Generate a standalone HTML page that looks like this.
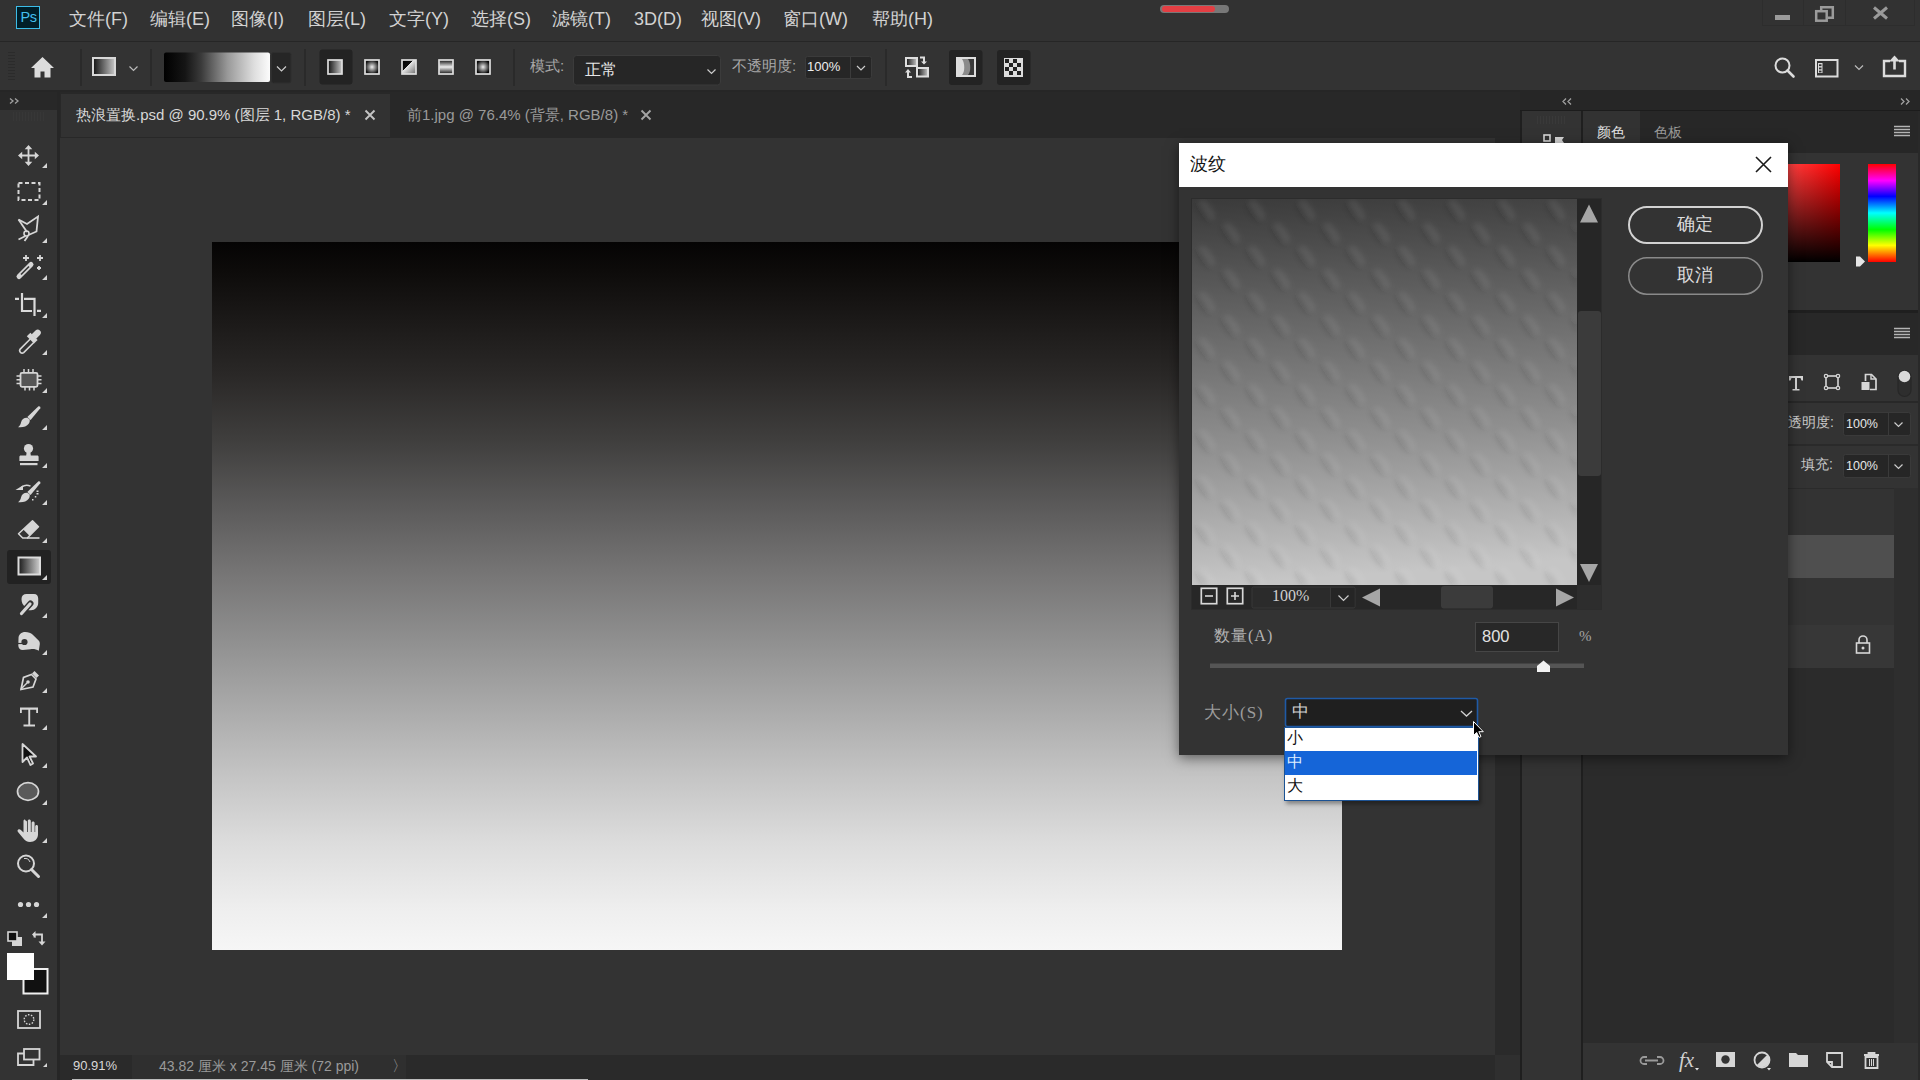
<!DOCTYPE html>
<html><head><meta charset="utf-8">
<style>
*{margin:0;padding:0;box-sizing:border-box}
html,body{width:1920px;height:1080px;overflow:hidden;background:#323232;font-family:"Liberation Sans",sans-serif;color:#d4d4d4}
.a{position:absolute}
.mi{top:7px;font-size:18px;line-height:24px;color:#d2d2d2;white-space:nowrap}
.sep{width:2px;background:#2a2a2a;top:49px;height:37px}
.lbl{font-size:15px;color:#a8a8a8;white-space:nowrap}
svg{position:absolute;overflow:visible}
</style></head><body>
<!-- ===== MENU BAR ===== -->
<div class="a" style="left:0;top:0;width:1920px;height:41px;background:#323232"></div>
<div class="a" style="left:0;top:41px;width:1920px;height:1px;background:#262626"></div>
<!-- Ps logo -->
<div class="a" style="left:16px;top:6px;width:24px;height:23px;background:#001e28;border:1.5px solid #3cbde8"></div>
<div class="a" style="left:20.5px;top:8.5px;font-size:14.5px;line-height:16px;color:#43bfee;letter-spacing:-0.3px">Ps</div>
<div class="a mi" style="left:69px">文件(F)</div>
<div class="a mi" style="left:150px">编辑(E)</div>
<div class="a mi" style="left:231px">图像(I)</div>
<div class="a mi" style="left:308px">图层(L)</div>
<div class="a mi" style="left:389px">文字(Y)</div>
<div class="a mi" style="left:471px">选择(S)</div>
<div class="a mi" style="left:552px">滤镜(T)</div>
<div class="a mi" style="left:634px">3D(D)</div>
<div class="a mi" style="left:701px">视图(V)</div>
<div class="a mi" style="left:783px">窗口(W)</div>
<div class="a mi" style="left:872px">帮助(H)</div>
<!-- progress pill -->
<div class="a" style="left:1160px;top:4.5px;width:69px;height:8px;border-radius:4px;background:#787878"></div>
<div class="a" style="left:1161.5px;top:5.5px;width:53px;height:6px;border-radius:3px;background:#e33e43"></div>
<!-- window controls -->
<div class="a" style="left:1762px;top:0;width:153px;height:26px;border:1px solid #2d2d2d;border-top:0"></div>
<div class="a" style="left:1803px;top:0;width:1px;height:25px;background:#2d2d2d"></div>
<div class="a" style="left:1845px;top:0;width:1px;height:25px;background:#2d2d2d"></div>
<svg style="left:0;top:0" width="1920" height="41">
  <rect x="1775" y="15" width="15" height="5" fill="#9a9a9a"/>
  <path d="M1821.2 10V7.2h11.6v10.6h-5" fill="none" stroke="#9a9a9a" stroke-width="2.5"/>
  <rect x="1816.2" y="11.2" width="10.5" height="9.5" fill="none" stroke="#9a9a9a" stroke-width="2.5"/>
  <path d="M1874 7.5L1887 18.5M1887 7.5L1874 18.5" stroke="#9a9a9a" stroke-width="3"/>
</svg>

<!-- ===== OPTIONS BAR ===== -->
<div class="a" style="left:0;top:42px;width:1920px;height:48px;background:#333333"></div>
<div class="a" style="left:0;top:90px;width:1920px;height:2px;background:#262626"></div>
<svg style="left:0;top:0" width="1920" height="92">
  <defs>
    <linearGradient id="gh" x1="0" x2="1" y1="0" y2="0"><stop offset="0" stop-color="#111"/><stop offset="1" stop-color="#c8c8c8"/></linearGradient>
    <linearGradient id="gbar" x1="0" x2="1"><stop offset="0" stop-color="#000"/><stop offset=".2" stop-color="#151515"/><stop offset=".35" stop-color="#3a3a3a"/><stop offset=".6" stop-color="#999"/><stop offset=".85" stop-color="#dedede"/><stop offset="1" stop-color="#fcfcfc"/></linearGradient>
    <radialGradient id="grad-r"><stop offset="0" stop-color="#f0f0f0"/><stop offset="1" stop-color="#151515"/></radialGradient>
    <linearGradient id="grad-ref" x1="0" x2="0" y1="0" y2="1"><stop offset="0" stop-color="#111"/><stop offset=".5" stop-color="#eee"/><stop offset="1" stop-color="#111"/></linearGradient>
    <linearGradient id="grad-ang" x1="0" x2="1" y1="0" y2="1"><stop offset="0" stop-color="#000"/><stop offset=".42" stop-color="#111"/><stop offset=".42" stop-color="#e6e6e6"/><stop offset="1" stop-color="#6a6a6a"/></linearGradient>
    <radialGradient id="grad-dia"><stop offset="0" stop-color="#eee"/><stop offset="1" stop-color="#0a0a0a"/></radialGradient>
  </defs>
  <!-- grip -->
  <g fill="#2b2b2b"><rect x="8" y="52" width="7" height="1"/><rect x="8" y="55" width="7" height="1"/><rect x="8" y="58" width="7" height="1"/><rect x="8" y="61" width="7" height="1"/><rect x="8" y="64" width="7" height="1"/><rect x="8" y="67" width="7" height="1"/><rect x="8" y="70" width="7" height="1"/><rect x="8" y="73" width="7" height="1"/><rect x="8" y="76" width="7" height="1"/><rect x="8" y="79" width="7" height="1"/></g>
  <!-- home -->
  <path d="M42.5 57L31 68h3.5v9.5h6v-6h4v6h6V68H54z" fill="#dcdcdc"/>
  <rect x="80" y="49" width="2" height="37" fill="#2a2a2a"/>
  <!-- preset swatch -->
  <rect x="93" y="58" width="22" height="17" fill="url(#gh)" stroke="#d8d8d8" stroke-width="2"/>
  <path d="M129.5 66.5l4 4 4-4" fill="none" stroke="#bbb" stroke-width="1.2"/>
  <rect x="150" y="49" width="2" height="37" fill="#2a2a2a"/>
  <!-- gradient bar -->
  <rect x="164" y="52.5" width="106" height="29.5" rx="2" fill="url(#gbar)"/>
  <rect x="271.5" y="52.5" width="19.5" height="30.5" rx="2" fill="#262626" stroke="#2e2e2e"/>
  <path d="M277 66.5l4.5 4.5 4.5-4.5" fill="none" stroke="#ccc" stroke-width="1.2"/>
  <rect x="304" y="49" width="2" height="37" fill="#2a2a2a"/>
  <!-- gradient types -->
  <rect x="319.5" y="49.5" width="33" height="35" rx="3" fill="#232323"/>
  <rect x="328" y="60" width="14" height="14" fill="url(#gh)" stroke="#dedede" stroke-width="1.7"/>
  <rect x="365" y="60" width="14" height="14" fill="url(#grad-r)" stroke="#dedede" stroke-width="1.7"/>
  <rect x="402" y="60" width="14" height="14" fill="url(#grad-ang)" stroke="#dedede" stroke-width="1.7"/>
  <rect x="439" y="60" width="14" height="14" fill="url(#grad-ref)" stroke="#dedede" stroke-width="1.7"/>
  <rect x="476" y="60" width="14" height="14" fill="url(#grad-dia)" stroke="#dedede" stroke-width="1.7"/>
  <rect x="513" y="49" width="2" height="37" fill="#2a2a2a"/>
  <!-- mode dropdown -->
  <rect x="573.5" y="55.5" width="147" height="29.5" rx="3" fill="#262626" stroke="#3b3b3b"/>
  <path d="M707.5 69.5l4 4 4-4" fill="none" stroke="#ccc" stroke-width="1.2"/>
  <!-- opacity box -->
  <rect x="805.5" y="56.5" width="66" height="22" rx="2" fill="#262626" stroke="#3b3b3b"/>
  <rect x="850" y="57" width="1" height="21" fill="#3b3b3b"/>
  <path d="M857 66l4 4 4-4" fill="none" stroke="#ccc" stroke-width="1.2"/>
  <rect x="885" y="49" width="2" height="37" fill="#2a2a2a"/>
  <!-- reverse icon -->
  <rect x="906" y="58" width="11" height="8" fill="url(#gh)" stroke="#dedede" stroke-width="2"/>
  <rect x="917" y="68" width="11" height="8.5" fill="url(#gh)" stroke="#dedede" stroke-width="2"/>
  <path d="M920 57.5h4v5" fill="none" stroke="#dedede" stroke-width="2"/><path d="M921 61.5h6l-3 3z" fill="#dedede"/>
  <path d="M912 77h-4v-5" fill="none" stroke="#dedede" stroke-width="2"/><path d="M905 72.5h6l-3-3.5z" fill="#dedede"/>
  <!-- dither -->
  <rect x="949" y="50" width="33.5" height="35" rx="3" fill="#232323"/>
  <rect x="957" y="58" width="18" height="18" fill="#3a3a3a" stroke="#dedede" stroke-width="2"/>
  <path d="M958 59h6c3 4 3 13 0 16h-6z" fill="#dcdcdc"/>
  <path d="M962 59h6c3 4 3 13 0 16h-6c3-3 3-12 0-16z" fill="#8a8a8a"/>
  <!-- transparency -->
  <rect x="997" y="50" width="33.5" height="35" rx="3" fill="#232323"/>
  <rect x="1004" y="58" width="19" height="19" fill="#dcdcdc"/>
  <g fill="#222"><rect x="1005" y="59" width="4" height="4"/><rect x="1013" y="59" width="4" height="4"/><rect x="1009" y="63" width="4" height="4"/><rect x="1017" y="63" width="4" height="4"/><rect x="1005" y="67" width="4" height="4"/><rect x="1013" y="67" width="4" height="4"/><rect x="1009" y="71" width="4" height="4"/><rect x="1017" y="71" width="4" height="4"/></g>
  <!-- right icons -->
  <circle cx="1782.5" cy="65.5" r="7" fill="none" stroke="#dcdcdc" stroke-width="2"/>
  <path d="M1787.5 70.5l6 6" stroke="#dcdcdc" stroke-width="2.6" stroke-linecap="round"/>
  <rect x="1816" y="60" width="21.5" height="16.5" fill="none" stroke="#dcdcdc" stroke-width="2"/>
  <rect x="1818" y="63" width="4.5" height="10" fill="#dcdcdc"/><rect x="1819" y="64.3" width="2.5" height="1.8" fill="#333"/><rect x="1819" y="67.5" width="2.5" height="1.8" fill="#333"/><rect x="1819" y="70.6" width="2.5" height="1.8" fill="#333"/>
  <path d="M1855 65.5l4 4 4-4" fill="none" stroke="#bbb" stroke-width="1.2"/>
  <path d="M1890 61h-6v15h21V61h-6" fill="none" stroke="#dcdcdc" stroke-width="2.4"/>
  <path d="M1894.5 69.5V59" stroke="#dcdcdc" stroke-width="2.6"/><path d="M1889 61.5l5.5-6 5.5 6z" fill="#dcdcdc"/>
</svg>
<div class="a lbl" style="left:530px;top:57px">模式:</div>
<div class="a" style="left:585px;top:60px;font-size:16px;color:#e6e6e6">正常</div>
<div class="a lbl" style="left:732px;top:57px">不透明度:</div>
<div class="a" style="left:807px;top:59px;font-size:13px;color:#eeeeee">100%</div>

<!-- ===== TOOLBAR ===== -->
<div class="a" style="left:0;top:92px;width:57px;height:988px;background:#333333"></div>
<div class="a" style="left:0;top:92px;width:57px;height:18px;background:#282828"></div>
<div class="a" style="left:57px;top:92px;width:3px;height:988px;background:#262626"></div>
<svg style="left:0;top:0" width="60" height="1080">
  <defs>
    <linearGradient id="tg" x1="0" x2="1"><stop offset="0" stop-color="#1a1a1a"/><stop offset="1" stop-color="#cfcfcf"/></linearGradient>
  </defs>
  <!-- >> -->
  <path d="M10 98.5l3 2.5-3 2.5M15 98.5l3 2.5-3 2.5" fill="none" stroke="#a0a0a0" stroke-width="1.3"/>
  <!-- grip -->
  <g fill="#373737"><rect x="13" y="112" width="1" height="9"/><rect x="16" y="112" width="1" height="9"/><rect x="19" y="112" width="1" height="9"/><rect x="22" y="112" width="1" height="9"/><rect x="25" y="112" width="1" height="9"/><rect x="28" y="112" width="1" height="9"/><rect x="31" y="112" width="1" height="9"/><rect x="34" y="112" width="1" height="9"/><rect x="37" y="112" width="1" height="9"/><rect x="40" y="112" width="1" height="9"/><rect x="43" y="112" width="1" height="9"/></g>
  <g fill="#d6d6d6" stroke="none">
    <!-- corner triangles -->
    <path d="M47 163v5h-5z M47 200v5h-5z M47 238v5h-5z M47 275v5h-5z M47 313v5h-5z M47 350v5h-5z M47 388v5h-5z M47 425v5h-5z M47 463v5h-5z M47 500v5h-5z M47 538v5h-5z M47 575v5h-5z M47 613v5h-5z M47 650v5h-5z M47 688v5h-5z M47 725v5h-5z M47 763v5h-5z M47 800v5h-5z M47 838v5h-5z M47 913v5h-5z" />
    <path d="M47 1063v4h-4z"/>
    <!-- move -->
    <path d="M28.5 145l-3.8 4.2h7.6z M28.5 166l-3.8-4.2h7.6z M18 155.5l4.2-3.8v7.6z M39 155.5l-4.2-3.8v7.6z"/><path d="M28.5 148v15M21 155.5h15" stroke="#d6d6d6" stroke-width="1.8"/>
  </g>
  <!-- marquee -->
  <rect x="18.5" y="183" width="21" height="17" fill="none" stroke="#d6d6d6" stroke-width="2" stroke-dasharray="4 2.5"/>
  <!-- lasso polygonal -->
  <path d="M18.5 219.5L27 224l11-7.5-1.5 15-8 3.5M25.5 236l-7 3.5M28 236l-3.5 5" fill="none" stroke="#d6d6d6" stroke-width="1.8"/>
  <path d="M18.5 219.5L27 232" fill="none" stroke="#d6d6d6" stroke-width="1.8"/>
  <circle cx="26.5" cy="233.5" r="2.5" fill="none" stroke="#d6d6d6" stroke-width="1.6"/>
  <!-- magic wand -->
  <path d="M19 276.5l12-12" stroke="#d6d6d6" stroke-width="5" stroke-linecap="round"/>
  <path d="M21 274.5l8-8" stroke="#333" stroke-width="1.6"/>
  <path d="M26 255v6M23 258h6M40 255v6M37 258h6M39 266v4M37 268h4" stroke="#d6d6d6" stroke-width="1.8"/>
  <!-- crop -->
  <path d="M15 298.8h4 M22 293v18h10 M24 298.8h10.5v17.2 M37 310.8h4" fill="none" stroke="#dadada" stroke-width="2.2"/>
  <!-- eyedropper -->
  <path d="M30.5 338.8L20.2 349.1a2.5 2.5 0 0 0 3.5 3.5L34 342.3" fill="none" stroke="#d6d6d6" stroke-width="1.6"/>
  <path d="M26.8 336.3l3.6-3.6 7.2 7.2-3.6 3.6z" fill="#d6d6d6"/>
  <path d="M31.5 334.5l4-4a3.1 3.1 0 0 1 4.4 4.4l-4 4z" fill="#d6d6d6"/>
  <!-- chip / frame -->
  <rect x="20.5" y="372.8" width="17" height="14" rx="1.5" fill="#555" stroke="#d6d6d6" stroke-width="1.8"/>
  <path d="M24 369v3.5M28.5 369v3.5M33 369v3.5M25 387v3.5M29.5 387v3.5M34 387v3.5M16.5 376h3.5M16.5 379.8h3.5M16.5 383.6h3.5M38 376h3.5M38 379.8h3.5M38 383.6h3.5" stroke="#d6d6d6" stroke-width="1.5"/>
  <!-- brush -->
  <path d="M38.2 406.6c1.1-.8 2.7.3 2.1 1.6L30.6 420l-3.3-3z" fill="#d6d6d6"/>
  <path d="M27.2 417.8c-3.2-.2-5.6 1.8-6.2 4.8-.4 2-1.5 3.6-2.9 4.6 4.2.6 8.6-.4 10.6-3.4 1-1.6 1.3-3.2.9-4.6z" fill="#d6d6d6"/>
  <!-- stamp -->
  <circle cx="28.5" cy="448.5" r="4.6" fill="#d6d6d6"/>
  <path d="M26.8 451h3.4l.6 4.6h6.4c.8 0 1.4.6 1.4 1.4v4h-19.2v-4c0-.8.6-1.4 1.4-1.4h5.4z" fill="#d6d6d6"/>
  <rect x="20" y="463" width="17.5" height="2.2" fill="#d6d6d6"/>
  <!-- history brush -->
  <path d="M38.2 481.6c1.1-.8 2.7.3 2.1 1.6L30.6 495l-3.3-3z" fill="#d6d6d6"/>
  <path d="M27.2 492.8c-3.2-.2-5.6 1.8-6.2 4.8-.4 2-1.5 3.6-2.9 4.6 4.2.6 8.6-.4 10.6-3.4 1-1.6 1.3-3.2.9-4.6z" fill="#d6d6d6"/>
  <path d="M15.5 490l7.5-4.8v4.8z" fill="#d6d6d6"/><path d="M21.5 487.2c2.5-2 6-2.6 9-1" fill="none" stroke="#d6d6d6" stroke-width="1.4"/>
  <path d="M36.5 490.5h2v1.5h-2zM36.5 493h2v1.5h-2zM34.8 496h1.5v1.5h-1.5zM32 499h1.5v1.5H32z" fill="#d6d6d6"/>
  <!-- eraser -->
  <path d="M32.5 520.8l6 6-9 9-6-6z" fill="#d6d6d6"/>
  <path d="M32.5 520.8l6 6L27.3 538h-4.6l-4.2-4.2z" fill="none" stroke="#d6d6d6" stroke-width="1.5" stroke-linejoin="round"/>
  <path d="M27 538h12.5" stroke="#d6d6d6" stroke-width="1.6"/>
  <!-- gradient selected -->
  <rect x="7" y="550" width="44" height="34" rx="3" fill="#222222"/>
  <rect x="18.5" y="557.5" width="21.5" height="17" fill="url(#tg)" stroke="#dcdcdc" stroke-width="2"/>
  <path d="M47 575v5h-5z" fill="#d6d6d6"/>
  <!-- smudge -->
  <path d="M21.5 599c0-3.2 2-5 5-5h7.5c2.8 0 4.2 1.8 4.2 4.5v4.5c0 4-3.2 7.2-7.2 7.2h-2.5l-3-3.5c-2.6-1.2-4-4-4-7.7z" fill="#d6d6d6"/>
  <path d="M30.5 603.5l-9 10" stroke="#333" stroke-width="6" stroke-linecap="round"/>
  <path d="M30 604l-8.5 9.5" stroke="#d6d6d6" stroke-width="3.2" stroke-linecap="round"/>
  <!-- sponge -->
  <path d="M18.5 638.5c0-4 2.8-6.5 6.8-6.5 3 0 5.5 1 7.5 2.8l5.8 5.6c1 1 1.4 2.4 1.2 3.8l-1 6.6c-2.6-1.6-5.2-2-8.4-1.6l-7.6.8c-2.8 0-4.5-1.8-4.5-4.5z" fill="#d6d6d6"/>
  <circle cx="24.5" cy="642" r="3.1" fill="#333"/>
  <path d="M17.5 643.5h5" stroke="#333" stroke-width="1.2"/>
  <!-- pen -->
  <path d="M34.5 671l4.5 4.5-2.5 2.5-4.5-4.5z" fill="#d6d6d6"/>
  <path d="M31.5 674.5l4.5 4.5-3 8-12 2.5 2.5-12z" fill="none" stroke="#d6d6d6" stroke-width="1.7"/>
  <path d="M21 689l6-6" stroke="#d6d6d6" stroke-width="1.4"/>
  <circle cx="28" cy="682" r="1.8" fill="#d6d6d6"/>
  <!-- type -->
  <path d="M20 707.5h18v5.5h-1.8v-3.2h-6v14.7h4.8v1.9h-11.5v-1.9h4.8V709.8h-6.5v3.2H20z" fill="#d6d6d6"/>
  <!-- path selection -->
  <path d="M22.5 744v18l4.5-4.5 3.5 7.5 2.5-1.5-3.5-7h6.5z" fill="#111" stroke="#d6d6d6" stroke-width="1.8" stroke-linejoin="round"/>
  <!-- ellipse -->
  <ellipse cx="28" cy="791.5" rx="10.5" ry="8.8" fill="#5a5a5a" stroke="#d6d6d6" stroke-width="1.7"/>
  <!-- hand -->
  <path d="M25.5 820.5c1 0 1.5.8 1.5 1.5v10h.8V821c0-1 .7-1.5 1.5-1.5s1.5.5 1.5 1.5v11h.8v-9c0-1 .7-1.5 1.5-1.5s1.5.5 1.5 1.5v9h.6v-5.5c0-1 .7-1.5 1.4-1.5s1.4.5 1.4 1.5v8c0 4.5-3.5 7.5-8 7.5-3 0-5-1.5-7-4l-5-6c-.8-1-.5-2 .3-2.5s1.8-.3 2.6.5l2.6 2.5v-11.5c0-1 .7-1.5 1.5-1.5z" fill="#d6d6d6"/>
  <!-- zoom -->
  <circle cx="26" cy="863.5" r="8" fill="none" stroke="#d6d6d6" stroke-width="2"/>
  <path d="M31.5 869.5l7 7" stroke="#d6d6d6" stroke-width="3" stroke-linecap="round"/>
  <path d="M24 858.5a5.5 5.5 0 0 1 6 3.5" fill="none" stroke="#d6d6d6" stroke-width="1"/>
  <!-- dots -->
  <circle cx="20.5" cy="904.5" r="2.6" fill="#d6d6d6"/><circle cx="28.5" cy="904.5" r="2.6" fill="#d6d6d6"/><circle cx="36.5" cy="904.5" r="2.6" fill="#d6d6d6"/>
  <!-- default colors -->
  <rect x="12" y="937" width="10" height="9" fill="#d6d6d6"/>
  <rect x="8" y="932" width="9" height="9" fill="#111" stroke="#d6d6d6" stroke-width="1.6"/>
  <!-- swap -->
  <path d="M34.5 937.5v-3h7.5v8" fill="none" stroke="#d6d6d6" stroke-width="1.8"/>
  <path d="M32 934.5l3.5-3.5v7z M38.5 941.5h7l-3.5 4z" fill="#d6d6d6"/>
  <!-- bg / fg -->
  <rect x="23.5" y="969" width="24" height="24.5" fill="#111" stroke="#f0f0f0" stroke-width="2"/>
  <rect x="7" y="953" width="27" height="27" fill="#ffffff"/>
  <!-- quick mask -->
  <rect x="18" y="1011" width="22" height="17" fill="none" stroke="#d6d6d6" stroke-width="1.8"/>
  <circle cx="29" cy="1019.5" r="4.8" fill="none" stroke="#d6d6d6" stroke-width="1.4" stroke-dasharray="1.5 1.5"/>
  <!-- screen mode -->
  <rect x="24" y="1049" width="15.5" height="10.5" fill="#333" stroke="#d6d6d6" stroke-width="1.8"/>
  <path d="M24 1053.5h-6v11.5h15.5v-5.5" fill="none" stroke="#d6d6d6" stroke-width="1.8"/>
</svg>

<!-- ===== TAB BAR ===== -->
<div class="a" style="left:60px;top:92px;width:1460px;height:46px;background:#282828"></div>
<div class="a" style="left:61px;top:94px;width:329px;height:43px;background:#323232"></div>
<div class="a" style="left:76px;top:106px;font-size:15px;color:#d8d8d8;white-space:nowrap">热浪置换.psd @ 90.9% (图层 1, RGB/8) *</div>
<svg style="left:0;top:0" width="700" height="140"><path d="M365.5 110.5l9 9M374.5 110.5l-9 9" stroke="#c4c4c4" stroke-width="1.9"/><path d="M641.5 110.5l9 9M650.5 110.5l-9 9" stroke="#a4a4a4" stroke-width="1.9"/></svg>
<div class="a" style="left:407px;top:106px;font-size:15px;color:#9a9a9a;white-space:nowrap">前1.jpg @ 76.4% (背景, RGB/8) *</div>


<!-- ===== CANVAS ===== -->
<div class="a" style="left:60px;top:138px;width:1435px;height:917px;background:#333333"></div>
<div class="a" style="left:212px;top:242px;width:1130px;height:708px;background:linear-gradient(#050404,#0d0b0a 4%,#181615 9.4%,#2a2827 18.8%,#403f3e 28.2%,#5c5b5b 37.7%,#777676 47.1%,#909090 56.5%,#aaaaaa 65.9%,#c4c4c4 75.3%,#dcdcdc 84.7%,#eeeeee 94%,#f6f6f6)"></div>
<!-- status bar -->
<div class="a" style="left:60px;top:1055px;width:1460px;height:25px;background:#2a2a2a"></div>
<div class="a" style="left:60px;top:1055px;width:72px;height:25px;background:#2a2a2a"></div>
<div class="a" style="left:132px;top:1055px;width:274px;height:25px;background:#2f2f2f"></div>
<div class="a" style="left:72px;top:1079px;width:516px;height:1px;background:#bdbdbd"></div>
<div class="a" style="left:73px;top:1058px;font-size:13px;color:#d8d8d8">90.91%</div>
<div class="a" style="left:159px;top:1058px;font-size:14px;color:#9a9a9a;white-space:nowrap">43.82 厘米 x 27.45 厘米 (72 ppi)</div>
<div class="a" style="left:392px;top:1057px;font-size:15px;color:#9a9a9a">〉</div>
<div class="a" style="left:1495px;top:138px;width:25px;height:917px;background:#2a2a2a"></div>

<!-- ===== RIGHT DOCK ===== -->
<div class="a" style="left:1520px;top:92px;width:400px;height:988px;background:#1f1f1f"></div>
<div class="a" style="left:1520px;top:92px;width:400px;height:18px;background:#262626"></div>
<div class="a" style="left:1520px;top:110px;width:400px;height:1px;background:#1c1c1c"></div>
<!-- collapsed icon column -->
<div class="a" style="left:1522px;top:111px;width:59px;height:969px;background:#333333"></div>
<!-- color panel -->
<div class="a" style="left:1583px;top:111px;width:337px;height:42px;background:#272727"></div>
<div class="a" style="left:1583px;top:111px;width:57px;height:42px;background:#323232"></div>
<div class="a" style="left:1597px;top:124px;font-size:14px;color:#e2e2e2">颜色</div>
<div class="a" style="left:1654px;top:124px;font-size:14px;color:#9c9c9c">色板</div>
<div class="a" style="left:1583px;top:153px;width:337px;height:157px;background:#333333"></div>
<div class="a" style="left:1640px;top:164px;width:200px;height:98px;background:linear-gradient(to bottom,rgba(0,0,0,0),#000),linear-gradient(to right,#fff,#ff0000)"></div>
<div class="a" style="left:1868px;top:164px;width:28px;height:98px;background:linear-gradient(#ff0000,#ff00ff 17%,#0000ff 33%,#00ffff 50%,#00ff00 67%,#ffff00 83%,#ff0000)"></div>
<!-- layers panel -->
<div class="a" style="left:1583px;top:313px;width:337px;height:42px;background:#282828"></div>
<div class="a" style="left:1583px;top:355px;width:337px;height:47px;background:#333333"></div>
<div class="a" style="left:1583px;top:401px;width:337px;height:2px;background:#282828"></div>
<div class="a" style="left:1583px;top:403px;width:337px;height:42px;background:#333333"></div>
<div class="a" style="left:1583px;top:444px;width:337px;height:2px;background:#2a2a2a"></div>
<div class="a" style="left:1583px;top:446px;width:337px;height:42px;background:#333333"></div>
<div class="a" style="left:1583px;top:488px;width:337px;height:555px;background:#2b2b2b"></div>
<div class="a" style="left:1583px;top:489px;width:311px;height:46px;background:#333333"></div>
<div class="a" style="left:1583px;top:535px;width:311px;height:43px;background:#4f4f4f"></div>
<div class="a" style="left:1583px;top:578px;width:311px;height:47px;background:#333333"></div>
<div class="a" style="left:1583px;top:625px;width:311px;height:43px;background:#373737"></div>
<div class="a" style="left:1894px;top:488px;width:26px;height:555px;background:#2e2e2e"></div>
<div class="a" style="left:1583px;top:1043px;width:337px;height:37px;background:#333333"></div>
<div class="a" style="left:1918px;top:111px;width:2px;height:969px;background:#292929"></div>
<div class="a" style="left:1788px;top:414px;font-size:14px;color:#c8c8c8;white-space:nowrap">透明度:</div>
<div class="a" style="left:1801px;top:456px;font-size:14px;color:#c8c8c8;white-space:nowrap">填充:</div>
<div class="a" style="left:1495px;top:1055px;width:25px;height:25px;background:#2f2f2f"></div>
<svg style="left:0;top:0" width="1920" height="1080">
  <path d="M1571 98.5l-3 3 3 3M1566 98.5l-3 3 3 3" fill="none" stroke="#a0a0a0" stroke-width="1.3"/>
  <path d="M1901 98.5l3 3-3 3M1906 98.5l3 3-3 3" fill="none" stroke="#a0a0a0" stroke-width="1.3"/>
  <g fill="#393939"><rect x="1537" y="116" width="1" height="8"/><rect x="1540" y="116" width="1" height="8"/><rect x="1543" y="116" width="1" height="8"/><rect x="1546" y="116" width="1" height="8"/><rect x="1549" y="116" width="1" height="8"/><rect x="1552" y="116" width="1" height="8"/><rect x="1555" y="116" width="1" height="8"/><rect x="1558" y="116" width="1" height="8"/><rect x="1561" y="116" width="1" height="8"/><rect x="1564" y="116" width="1" height="8"/></g>
  <rect x="1544" y="135" width="6" height="6" fill="none" stroke="#d6d6d6" stroke-width="1.6"/>
  <path d="M1555 137h9l-2 3 2 3h-9z" fill="#d6d6d6"/>
  <!-- menu icons -->
  <path d="M1894 126.5h16M1894 129.5h16M1894 132.5h16M1894 135.5h16" stroke="#b4b4b4" stroke-width="1.4"/>
  <path d="M1894 328.5h16M1894 331.5h16M1894 334.5h16M1894 337.5h16" stroke="#b4b4b4" stroke-width="1.4"/>
  <!-- hue pointer -->
  <path d="M1856 256.5h4l5 5-5 5h-4z" fill="#e6e6e6"/>
  <!-- layer tool row icons -->
  <path d="M1789 376h14v4.5h-1.5l-1-2.5h-3.5v11h2.5v1.5h-7v-1.5h2.5v-11h-3.5l-1 2.5H1789z" fill="#d6d6d6"/>
  <rect x="1826" y="376" width="12" height="12" fill="none" stroke="#d6d6d6" stroke-width="1.6"/>
  <circle cx="1826" cy="376" r="1.7" fill="#333" stroke="#d6d6d6" stroke-width="1.2"/><circle cx="1838" cy="376" r="1.7" fill="#333" stroke="#d6d6d6" stroke-width="1.2"/><circle cx="1826" cy="388" r="1.7" fill="#333" stroke="#d6d6d6" stroke-width="1.2"/><circle cx="1838" cy="388" r="1.7" fill="#333" stroke="#d6d6d6" stroke-width="1.2"/>
  <path d="M1865.5 381v-6.5h6l4.5 4.5v10.5h-6" fill="none" stroke="#d6d6d6" stroke-width="1.7"/>
  <path d="M1871 374.5v4.5h5" fill="none" stroke="#d6d6d6" stroke-width="1.4"/>
  <rect x="1861.5" y="382" width="8" height="8" fill="#d6d6d6"/>
  <rect x="1898" y="370.5" width="13" height="26" rx="6.5" fill="#2e2e2e" stroke="#272727" stroke-width="1.2"/>
  <circle cx="1904.5" cy="376.5" r="5.8" fill="#d8d8d8"/>
  <!-- opacity/fill boxes -->
  <rect x="1843.5" y="412.5" width="67" height="23" rx="2" fill="#262626" stroke="#3a3a3a"/>
  <rect x="1888" y="413" width="1" height="22" fill="#3a3a3a"/>
  <path d="M1894.5 422.5l4 4 4-4" fill="none" stroke="#ccc" stroke-width="1.2"/>
  <rect x="1843.5" y="454.5" width="67" height="23" rx="2" fill="#262626" stroke="#3a3a3a"/>
  <rect x="1888" y="455" width="1" height="22" fill="#3a3a3a"/>
  <path d="M1894.5 464.5l4 4 4-4" fill="none" stroke="#ccc" stroke-width="1.2"/>
  <!-- lock -->
  <path d="M1859 643v-3a4 4 0 0 1 8 0v3" fill="none" stroke="#d6d6d6" stroke-width="1.6"/>
  <rect x="1856.5" y="643" width="13" height="10" fill="none" stroke="#d6d6d6" stroke-width="1.6"/>
  <circle cx="1863" cy="648" r="1.5" fill="#d6d6d6"/>
  <!-- bottom icons -->
  <path d="M1647 1057h-3a3.5 3.5 0 0 0 0 7h3M1657 1057h3a3.5 3.5 0 0 1 0 7h-3M1645 1060.5h13" fill="none" stroke="#9a9a9a" stroke-width="1.8"/>
  <text x="1679" y="1067" font-family="Liberation Serif" font-style="italic" font-size="21" fill="#d0d0d0">fx</text>
  <path d="M1695 1068l2 2.5 2-2.5z" fill="#e6e6e6"/>
  <rect x="1716" y="1052" width="19" height="15" fill="#d6d6d6"/><circle cx="1725.5" cy="1059.5" r="4.2" fill="#333"/>
  <circle cx="1762" cy="1060" r="7.5" fill="none" stroke="#d6d6d6" stroke-width="1.8"/>
  <path d="M1767.3 1054.7a7.5 7.5 0 0 1-10.6 10.6z" fill="#d6d6d6"/>
  <path d="M1767 1068l2 2.5 2-2.5z" fill="#e6e6e6"/>
  <path d="M1789 1053h7l2 2h10v12h-19z" fill="#d6d6d6"/>
  <path d="M1827 1053h15v14h-10l-5-5z" fill="none" stroke="#d6d6d6" stroke-width="1.8"/>
  <path d="M1827 1062h5v5" fill="none" stroke="#d6d6d6" stroke-width="1.8"/>
  <path d="M1864 1055h15M1868.5 1055v-2h6v2" fill="none" stroke="#d6d6d6" stroke-width="1.8"/>
  <path d="M1865.5 1057h12v11h-12z" fill="none" stroke="#d6d6d6" stroke-width="1.8"/>
  <path d="M1869.5 1059v7M1871.5 1059v7M1873.5 1059v7" stroke="#d6d6d6" stroke-width="1"/>
</svg>
<div class="a" style="left:1846px;top:417px;font-size:12.5px;color:#e6e6e6">100%</div>
<div class="a" style="left:1846px;top:459px;font-size:12.5px;color:#e6e6e6">100%</div>

<!-- ===== DIALOG ===== -->
<div class="a" style="left:1179px;top:143px;width:609px;height:612px;background:#333333;box-shadow:0 3px 12px rgba(0,0,0,.5)"></div>
<div class="a" style="left:1179px;top:143px;width:609px;height:44px;background:#ffffff"></div>
<div class="a" style="left:1190px;top:152px;font-size:18px;color:#151515">波纹</div>
<svg style="left:0;top:0" width="1920" height="1080">
  <defs>
    <linearGradient id="pv" gradientUnits="userSpaceOnUse" x1="1192" y1="199" x2="1220" y2="585">
      <stop offset="0" stop-color="#3a3a3a"/><stop offset=".39" stop-color="#6e6e6e"/><stop offset=".65" stop-color="#909090"/><stop offset="1" stop-color="#c6c6c6"/>
    </linearGradient>
    <filter id="blr" x="0" y="0" width="1" height="1"><feGaussianBlur stdDeviation="2.6"/></filter>
    <pattern id="rip" width="50" height="46" patternUnits="userSpaceOnUse" x="1192" y="199">
      <g id="bump">
        <ellipse cx="15.5" cy="10.5" rx="12" ry="4.5" transform="rotate(55 15.5 10.5)" fill="#ffffff" fill-opacity=".065"/>
        <ellipse cx="10.5" cy="14" rx="12" ry="4.5" transform="rotate(55 10.5 14)" fill="#000000" fill-opacity=".075"/>
      </g>
      <use href="#bump" x="25" y="23"/>
      <use href="#bump" x="-25" y="23"/>
      <use href="#bump" x="0" y="-46"/>
      <use href="#bump" x="25" y="-23"/>
      <use href="#bump" x="-25" y="-23"/>
      <use href="#bump" x="50" y="0"/>
      <use href="#bump" x="-50" y="0"/>
    </pattern>
  </defs>
  <path d="M1756 157l15 15M1771 157l-15 15" stroke="#1a1a1a" stroke-width="1.6"/>
  <!-- preview frame -->
  <rect x="1191" y="198" width="411" height="412" fill="#2c2c2c"/>
  <rect x="1192" y="199" width="385" height="386" fill="url(#pv)"/>
  <rect x="1192" y="199" width="385" height="386" fill="url(#rip)" filter="url(#blr)"/>
  <rect x="1577" y="199" width="24" height="386" fill="#262626"/>
  <path d="M1589 204.5l9 18h-18z" fill="#a6a6a6"/>
  <rect x="1578" y="311" width="23" height="165" rx="3" fill="#3b3b3b"/>
  <path d="M1589 582l9-18h-18z" fill="#a6a6a6"/>
  <rect x="1192" y="585" width="409" height="24" fill="#272727"/>
  <rect x="1577" y="585" width="24" height="24" fill="#2d2d2d"/>
  <rect x="1201.3" y="588.3" width="15.4" height="15.4" fill="none" stroke="#d8d8d8" stroke-width="1.7"/>
  <path d="M1205 596h8" stroke="#d8d8d8" stroke-width="1.6"/>
  <rect x="1227.3" y="588.3" width="15.4" height="15.4" fill="none" stroke="#d8d8d8" stroke-width="1.7"/>
  <path d="M1231 596h8M1235 592v8" stroke="#d8d8d8" stroke-width="1.6"/>
  <rect x="1252" y="587" width="103" height="21" rx="1.5" fill="#2b2b2b" stroke="#383838"/>
  <rect x="1330" y="587.5" width="1" height="20" fill="#383838"/>
  <rect x="1331" y="588" width="23.5" height="19" fill="#252525"/>
  <path d="M1338.5 595.5l5 5 5-5" fill="none" stroke="#cccccc" stroke-width="1.2"/>
  <path d="M1362 597.5l18-9v18z" fill="#a6a6a6"/>
  <rect x="1441" y="586" width="52" height="22.5" rx="3" fill="#3b3b3b"/>
  <path d="M1574 597.5l-18-9v18z" fill="#a6a6a6"/>
  <!-- buttons -->
  <rect x="1629" y="207" width="133" height="36" rx="18" fill="none" stroke="#d2d2d2" stroke-width="2"/>
  <rect x="1628.75" y="257.75" width="133.5" height="36.5" rx="18.25" fill="none" stroke="#8a8a8a" stroke-width="1.5"/>
  <!-- amount -->
  <rect x="1475.5" y="622.5" width="83" height="29" fill="#282828" stroke="#464646"/>
  <rect x="1210" y="663.5" width="374" height="4.5" fill="#555555"/>
  <path d="M1543.5 660.5l6.5 5.5v6h-13v-6z" fill="#f2f2f2"/>
  <!-- size select -->
  <rect x="1285.5" y="698.5" width="192" height="28" rx="2" fill="#1f1f1f" stroke="#1f5aa6" stroke-width="1.6"/>
  <path d="M1461 711l5.5 5 5.5-5" fill="none" stroke="#d0d0d0" stroke-width="1.3"/>
</svg>
<div class="a" style="left:1677px;top:212px;font-size:18px;color:#dcdcdc;font-family:'Liberation Serif',serif">确定</div>
<div class="a" style="left:1677px;top:263px;font-size:18px;color:#dcdcdc;font-family:'Liberation Serif',serif">取消</div>
<div class="a" style="left:1272px;top:587px;font-size:16px;color:#cfcfcf;font-family:'Liberation Serif',serif">100%</div>
<div class="a" style="left:1214px;top:626px;font-size:16px;color:#b4b4b4;font-family:'Liberation Serif',serif;white-space:nowrap;letter-spacing:1px">数量(A)</div>
<div class="a" style="left:1482px;top:627px;font-size:16.5px;color:#e2e2e2">800</div>
<div class="a" style="left:1579px;top:628px;font-size:15px;color:#a4a4a4;font-family:'Liberation Serif',serif">%</div>
<div class="a" style="left:1204px;top:701px;font-size:17px;color:#9c9c9c;font-family:'Liberation Serif',serif;white-space:nowrap;letter-spacing:1px">大小(S)</div>
<div class="a" style="left:1292px;top:700px;font-size:17px;color:#cfcfcf">中</div>
<!-- dropdown list -->
<div class="a" style="left:1284px;top:727px;width:195px;height:74px;background:#ffffff;border:1px solid #1d5394;box-shadow:2px 3px 4px rgba(0,0,0,.35)"></div>
<div class="a" style="left:1285px;top:751px;width:192px;height:23.5px;background:#1565d8"></div>
<div class="a" style="left:1287px;top:728px;font-size:16px;color:#111">小</div>
<div class="a" style="left:1287px;top:752px;font-size:16px;color:#dfeeff">中</div>
<div class="a" style="left:1287px;top:776px;font-size:16px;color:#111">大</div>
<!-- cursor -->
<svg style="left:0;top:0" width="1920" height="1080">
  <path d="M1473.5 721.5v14l3.2-3 2.3 5 2-1-2.2-4.8h4.5z" fill="#000" stroke="#fff" stroke-width="1"/>
</svg>
</body></html>
